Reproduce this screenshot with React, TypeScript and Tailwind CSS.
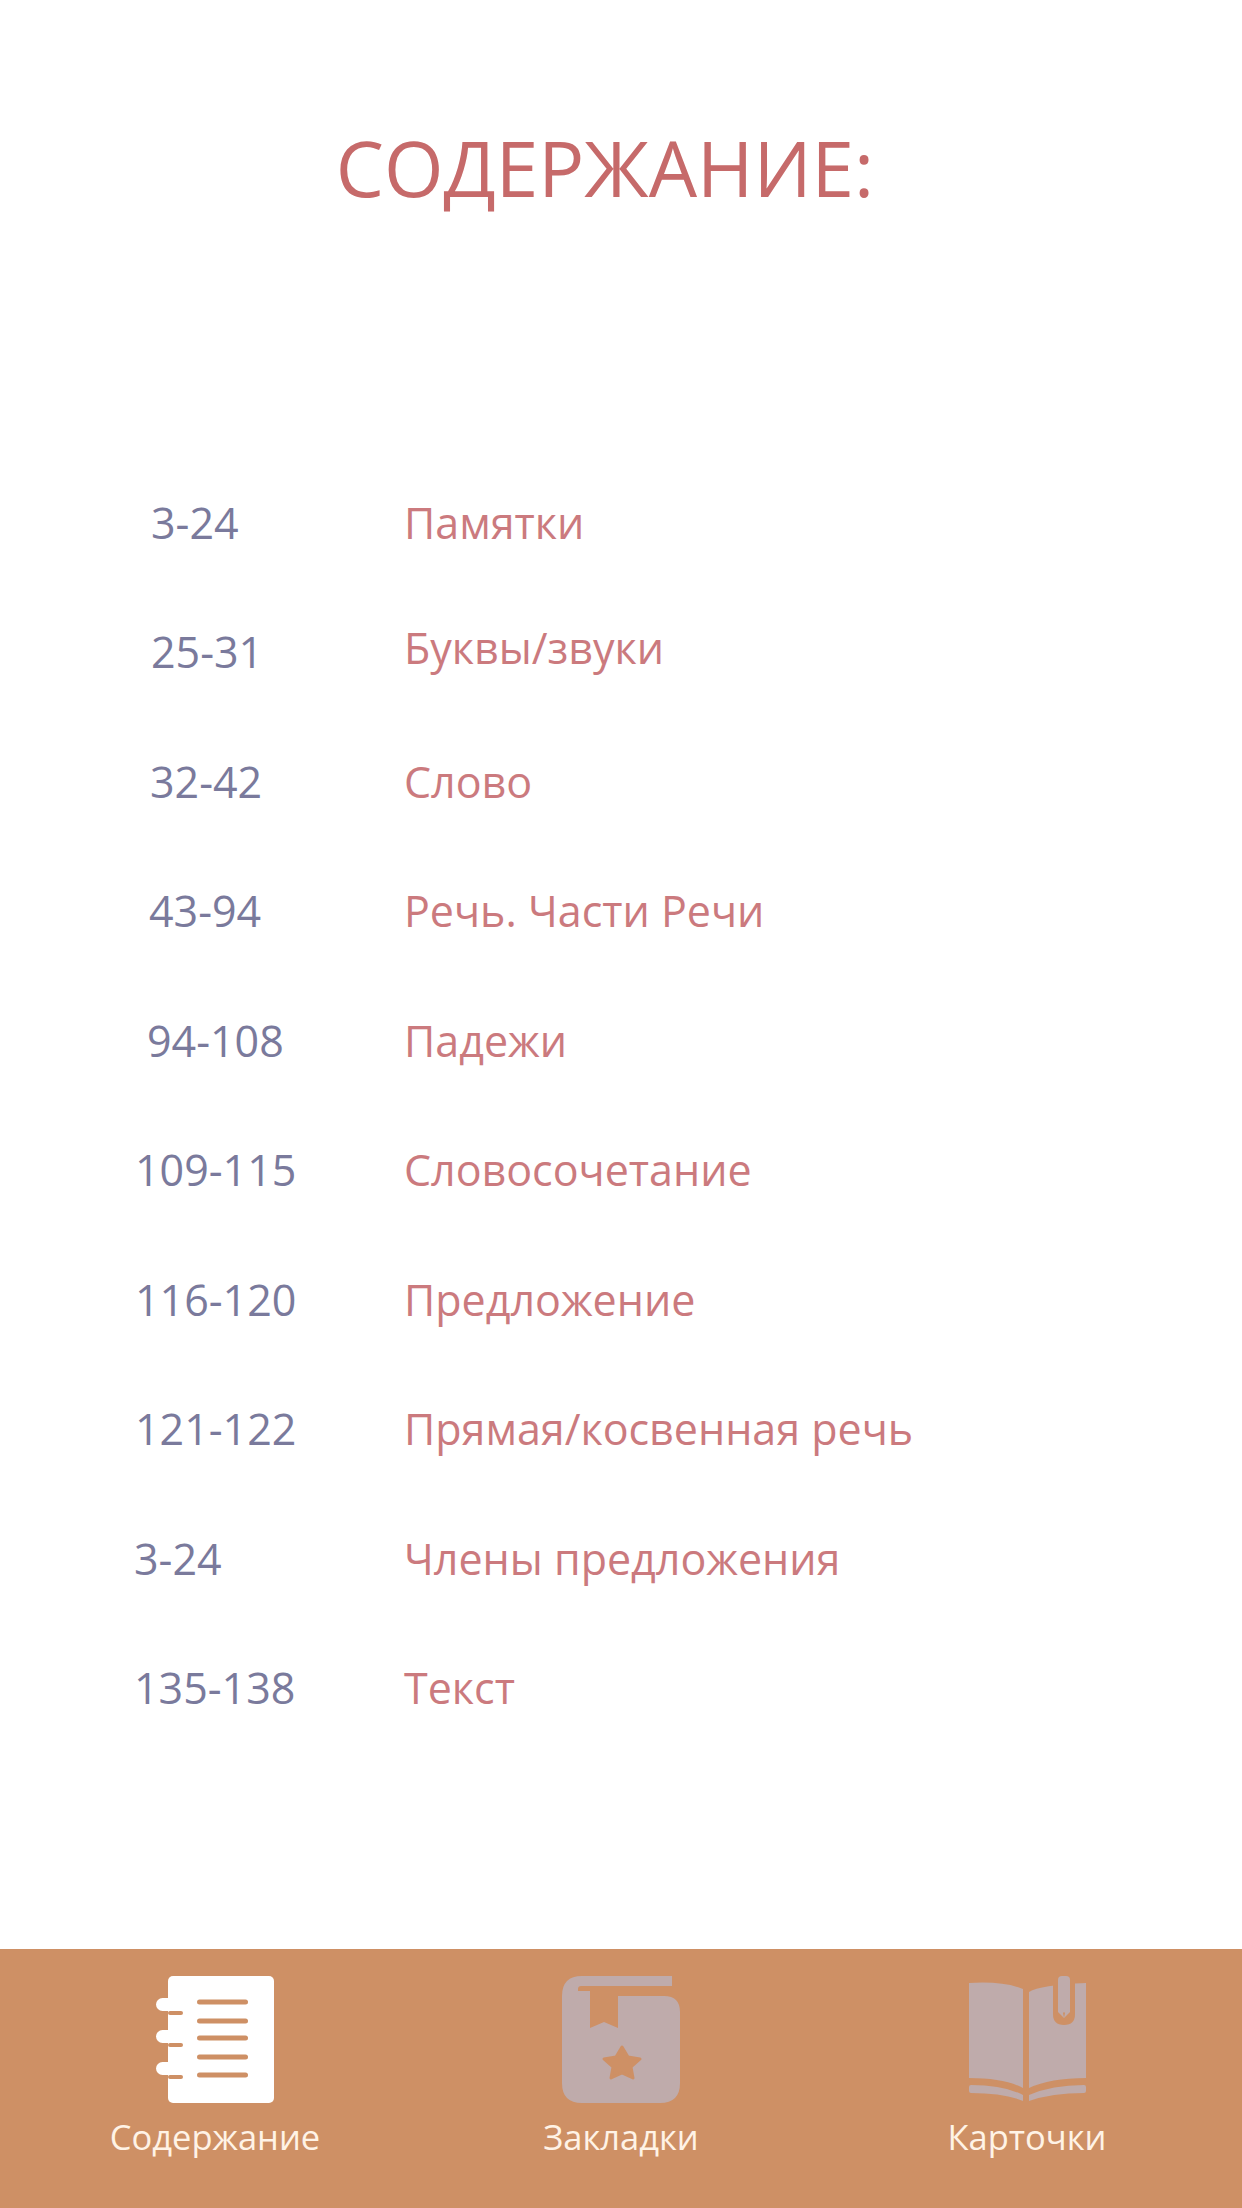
const ROWS = [
  { pages: "3-24", title: "Памятки", pad: "pl-[151px]", shift: "" },
  { pages: "25-31", title: "Буквы/звуки", pad: "pl-[151px]", shift: "pb-[8px]" },
  { pages: "32-42", title: "Слово", pad: "pl-[150px]", shift: "" },
  { pages: "43-94", title: "Речь. Части Речи", pad: "pl-[149px]", shift: "" },
  { pages: "94-108", title: "Падежи", pad: "pl-[147px]", shift: "" },
  { pages: "109-115", title: "Словосочетание", pad: "pl-[135px]", shift: "" },
  { pages: "116-120", title: "Предложение", pad: "pl-[135px]", shift: "" },
  { pages: "121-122", title: "Прямая/косвенная речь", pad: "pl-[135px]", shift: "" },
  { pages: "3-24", title: "Члены предложения", pad: "pl-[134px]", shift: "" },
  { pages: "135-138", title: "Текст", pad: "pl-[134px]", shift: "" },
];

const BAR = "#ce9065";
const MUTED = "#bfabab";

function NotebookIcon() {
  const lines = [26, 45, 62, 81, 99];
  const rings = [22, 54, 86];
  return (
    <svg width="118" height="129" viewBox="0 0 118 129">
      <rect x="12" y="0" width="106" height="127" rx="5" fill="#fff" />
      {rings.map((y) => (
        <g key={y}>
          <rect x="0" y={y} width="24" height="13" rx="6.5" fill="#fff" />
          <rect x="12" y={y + 13} width="15" height="4" rx="2" fill={BAR} />
        </g>
      ))}
      {lines.map((y) => (
        <rect key={y} x="41" y={y - 2.5} width="51" height="5" rx="2.5" fill={BAR} />
      ))}
    </svg>
  );
}

function BookmarkBookIcon() {
  return (
    <svg width="118" height="129" viewBox="0 0 118 129">
      <path d="M20 0H110V10H60V20H102Q118 20 118 36V107Q118 127 98 127H20Q0 127 0 107V20Q0 0 20 0Z" fill={MUTED} />
      <path d="M16 15V13Q16 10 19 10H60V20H56V15Z" fill={BAR} />
      <path d="M28 15H56V52L42 46L28 52Z" fill={BAR} />
      <path
        d="M60 71L66 81L78 83L69 91L71 102L60 97L49 102L51 91L42 83L54 81Z"
        fill={BAR}
        stroke={BAR}
        strokeWidth="3"
        strokeLinejoin="round"
      />
    </svg>
  );
}

function OpenBookIcon() {
  return (
    <svg width="119" height="129" viewBox="0 0 119 129">
      <path d="M1 7Q36 5 55 13V112Q36 102 1 102Z" fill={MUTED} />
      <path d="M61 16Q72 9 118 7V102Q82 102 61 112Z" fill={MUTED} />
      <path d="M85 0H107V38Q107 49 96 49Q85 49 85 38Z" fill={BAR} />
      <path d="M90 4Q90 0 94 0H98Q102 0 102 4V36L96 42L90 36Z" fill={MUTED} />
      <path d="M95 37L96 36L97 37L96 42Z" fill={BAR} />
      <path d="M1 111Q1 109 3 109Q36 109 55 119V125Q36 117 3 117Q1 117 1 115Z" fill={MUTED} />
      <path d="M118 111Q118 109 116 109Q84 109 61 119V125Q84 117 116 117Q118 117 118 115Z" fill={MUTED} />
    </svg>
  );
}

const TABS = [
  { label: "Содержание", icon: <NotebookIcon /> },
  { label: "Закладки", icon: <BookmarkBookIcon /> },
  { label: "Карточки", icon: <OpenBookIcon /> },
];

export default function App() {
  return (
    <div className="flex h-[2208px] w-[1242px] flex-col bg-white font-['Open_Sans',sans-serif]">
      <h1 className="flex h-[458px] shrink-0 justify-center pt-[122px] pr-[32px] text-[76.5px] leading-[90px] font-normal text-[#c66a6a]">
        СОДЕРЖАНИЕ:
      </h1>

      <div className="flex-1">
        {ROWS.map((row) => (
          <div key={row.title} className="grid h-[129.5px] grid-cols-[404px_1fr] items-center text-[43px] leading-[56px]">
            <span className={`${row.pad} text-[#7a7a9c]`}>{row.pages}</span>
            <span className={`${row.shift} text-[#cb7a7e]`}>{row.title}</span>
          </div>
        ))}
      </div>

      <nav className="grid h-[259px] shrink-0 grid-cols-[406px_406px_406px] justify-center bg-[#ce9065] pt-[27px]">
        {TABS.map((tab) => (
          <div key={tab.label} className="flex flex-col items-center gap-[10px]">
            {tab.icon}
            <span className="text-[34.5px] leading-[44px] text-[#fff3e6]">{tab.label}</span>
          </div>
        ))}
      </nav>
    </div>
  );
}
